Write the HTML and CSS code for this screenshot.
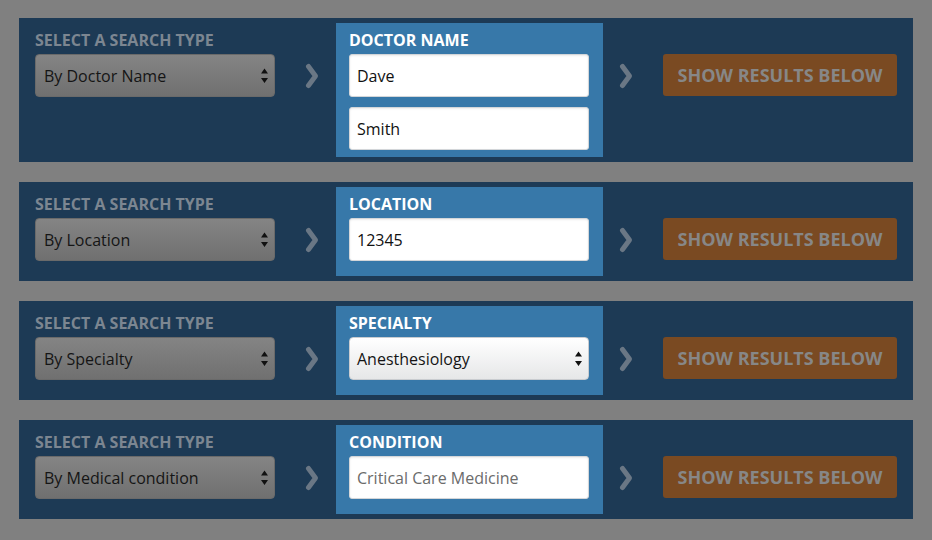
FILE: index.html
```html
<!DOCTYPE html>
<html lang="en">
<head>
<meta charset="utf-8">
<title>Find a Doctor</title>
<link rel="stylesheet" href="styles.css">
</head>
<body>
<main class="stack">

  <section class="panel">
    <div class="type-col">
      <div class="type-label">SELECT A SEARCH TYPE</div>
      <div class="type-select"><span>By Doctor Name</span><svg class="updown" width="7" height="16" viewBox="0 0 7 16"><path d="M3.5 0.5 L7 5.5 L0 5.5 Z M0 10 L7 10 L3.5 15 Z" fill="#111"/></svg></div>
    </div>
    <div class="chev"><svg width="14" height="26" viewBox="0 0 14 26"><polyline points="3.5,3.5 10.5,13 3.5,22.5" fill="none" stroke="#6a7785" stroke-width="5" stroke-linecap="round" stroke-linejoin="round"/></svg></div>
    <div class="field-box">
      <div class="field-label">DOCTOR NAME</div>
      <div class="text-input">Dave</div>
      <div class="text-input">Smith</div>
    </div>
    <div class="chev"><svg width="14" height="26" viewBox="0 0 14 26"><polyline points="3.5,3.5 10.5,13 3.5,22.5" fill="none" stroke="#6a7785" stroke-width="5" stroke-linecap="round" stroke-linejoin="round"/></svg></div>
    <div class="btn">SHOW RESULTS BELOW</div>
  </section>

  <section class="panel">
    <div class="type-col">
      <div class="type-label">SELECT A SEARCH TYPE</div>
      <div class="type-select"><span>By Location</span><svg class="updown" width="7" height="16" viewBox="0 0 7 16"><path d="M3.5 0.5 L7 5.5 L0 5.5 Z M0 10 L7 10 L3.5 15 Z" fill="#111"/></svg></div>
    </div>
    <div class="chev"><svg width="14" height="26" viewBox="0 0 14 26"><polyline points="3.5,3.5 10.5,13 3.5,22.5" fill="none" stroke="#6a7785" stroke-width="5" stroke-linecap="round" stroke-linejoin="round"/></svg></div>
    <div class="field-box">
      <div class="field-label">LOCATION</div>
      <div class="text-input">12345</div>
    </div>
    <div class="chev"><svg width="14" height="26" viewBox="0 0 14 26"><polyline points="3.5,3.5 10.5,13 3.5,22.5" fill="none" stroke="#6a7785" stroke-width="5" stroke-linecap="round" stroke-linejoin="round"/></svg></div>
    <div class="btn">SHOW RESULTS BELOW</div>
  </section>

  <section class="panel">
    <div class="type-col">
      <div class="type-label">SELECT A SEARCH TYPE</div>
      <div class="type-select"><span>By Specialty</span><svg class="updown" width="7" height="16" viewBox="0 0 7 16"><path d="M3.5 0.5 L7 5.5 L0 5.5 Z M0 10 L7 10 L3.5 15 Z" fill="#111"/></svg></div>
    </div>
    <div class="chev"><svg width="14" height="26" viewBox="0 0 14 26"><polyline points="3.5,3.5 10.5,13 3.5,22.5" fill="none" stroke="#6a7785" stroke-width="5" stroke-linecap="round" stroke-linejoin="round"/></svg></div>
    <div class="field-box">
      <div class="field-label">SPECIALTY</div>
      <div class="light-select"><span>Anesthesiology</span><svg class="updown" width="7" height="16" viewBox="0 0 7 16"><path d="M3.5 0.5 L7 5.5 L0 5.5 Z M0 10 L7 10 L3.5 15 Z" fill="#111"/></svg></div>
    </div>
    <div class="chev"><svg width="14" height="26" viewBox="0 0 14 26"><polyline points="3.5,3.5 10.5,13 3.5,22.5" fill="none" stroke="#6a7785" stroke-width="5" stroke-linecap="round" stroke-linejoin="round"/></svg></div>
    <div class="btn">SHOW RESULTS BELOW</div>
  </section>

  <section class="panel">
    <div class="type-col">
      <div class="type-label">SELECT A SEARCH TYPE</div>
      <div class="type-select"><span>By Medical condition</span><svg class="updown" width="7" height="16" viewBox="0 0 7 16"><path d="M3.5 0.5 L7 5.5 L0 5.5 Z M0 10 L7 10 L3.5 15 Z" fill="#111"/></svg></div>
    </div>
    <div class="chev"><svg width="14" height="26" viewBox="0 0 14 26"><polyline points="3.5,3.5 10.5,13 3.5,22.5" fill="none" stroke="#6a7785" stroke-width="5" stroke-linecap="round" stroke-linejoin="round"/></svg></div>
    <div class="field-box">
      <div class="field-label">CONDITION</div>
      <div class="text-input placeholder">Critical Care Medicine</div>
    </div>
    <div class="chev"><svg width="14" height="26" viewBox="0 0 14 26"><polyline points="3.5,3.5 10.5,13 3.5,22.5" fill="none" stroke="#6a7785" stroke-width="5" stroke-linecap="round" stroke-linejoin="round"/></svg></div>
    <div class="btn">SHOW RESULTS BELOW</div>
  </section>

</main>
</body>
</html>
```

FILE: styles.css
```css
* { box-sizing: border-box; }

html, body {
  margin: 0;
  padding: 0;
}

body {
  background: #808080;
  font-family: "Open Sans", "Liberation Sans", sans-serif;
  width: 932px;
  height: 540px;
  overflow: hidden;
}

.stack {
  display: flex;
  flex-direction: column;
  gap: 20px;
  padding: 18px 19px;
}

.panel {
  width: 894px;
  min-height: 99px;
  background: #1d3a55;
  display: flex;
  align-items: flex-start;
  padding: 5px 16px;
}

.type-col {
  width: 240px;
  flex: none;
  padding-top: 8px;
}

.type-label,
.field-label {
  font-size: 16px;
  font-weight: 700;
  line-height: 18px;
  height: 18px;
  margin-bottom: 5px;
  white-space: nowrap;
}

.type-label { color: #7c8691; }
.field-label { color: #ffffff; }

.type-select,
.light-select {
  height: 43px;
  border-radius: 4px;
  display: flex;
  align-items: center;
  justify-content: space-between;
  padding: 0 6px 0 8px;
  font-size: 16px;
  color: #151515;
}

.type-select {
  background: linear-gradient(#848484, #707070);
  border: 1px solid #6a6a6a;
}

.light-select {
  background: linear-gradient(#ffffff, #e6e7e8);
  border: 1px solid #c9ccd0;
  padding-left: 7px;
}

.updown { flex: none; }

.chev {
  flex: none;
  width: 14px;
  height: 43px;
  margin-top: 31px;
  display: flex;
  align-items: center;
}

.panel > .chev:nth-child(2) { margin: 31px 17px 0 30px; }
.panel > .chev:nth-child(4) { margin: 31px 30px 0 16px; }

.field-box {
  flex: none;
  width: 267px;
  align-self: stretch;
  background: #3778a9;
  padding: 8px 14px 7px 13px;
  display: flex;
  flex-direction: column;
}

.text-input {
  height: 43px;
  flex: none;
  background: #ffffff;
  border: 1px solid #d3d6d9;
  border-radius: 3px;
  box-shadow: inset 0 1px 2px rgba(0, 0, 0, 0.08);
  display: flex;
  align-items: center;
  padding-left: 7px;
  font-size: 16px;
  color: #111111;
}

.text-input + .text-input { margin-top: 10px; }

.text-input.placeholder { color: #6b6b6b; }

.btn {
  flex: none;
  width: 234px;
  height: 42px;
  margin-top: 31px;
  background: #7a4a22;
  border-radius: 3px;
  color: #878787;
  font-size: 18px;
  font-weight: 700;
  display: flex;
  align-items: center;
  justify-content: center;
  white-space: nowrap;
}
```
